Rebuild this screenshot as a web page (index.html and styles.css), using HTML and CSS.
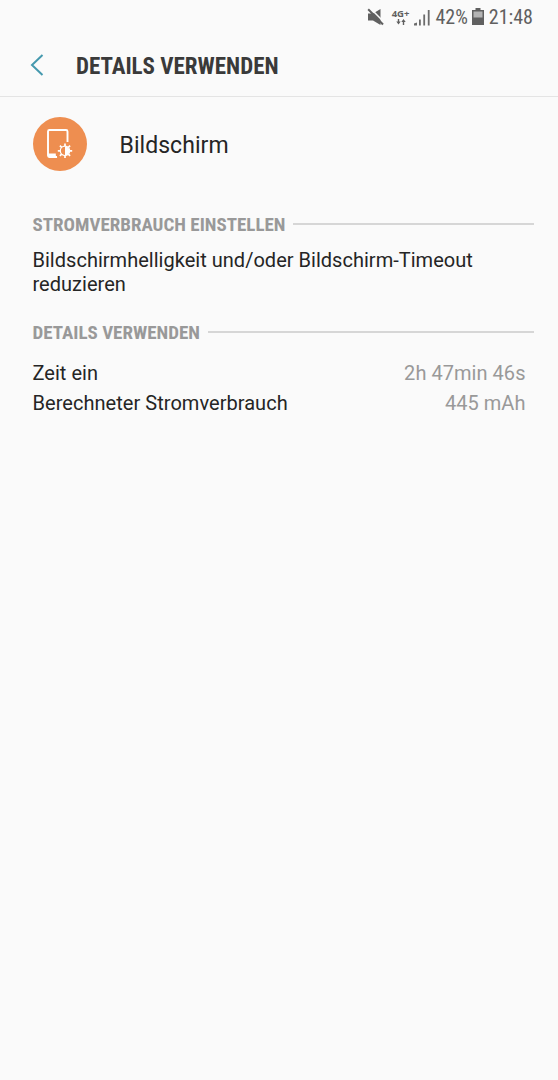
FILE: index.html
```html
<!DOCTYPE html>
<html lang="de">
<head>
    <meta charset="UTF-8">
    <meta name="viewport" content="width=device-width, initial-scale=1.0">
    <title>Details verwenden</title>
    <link rel="stylesheet" href="styles.css">
</head>
<body>
    <div class="status-bar">
        <svg class="icon-mute" width="18" height="18" viewBox="0 0 18 18">
            <path d="M1 5.500h5l7.500-4.500v16L6 12.500H1z" fill="#606060"/>
            <path d="M3 0L18 15" stroke="#fafafa" stroke-width="1.500"/>
            <path d="M1.200 1.200L16 16.500" stroke="#606060" stroke-width="2"/>
        </svg>
        <div class="network">
            <span class="network-type">4G+</span>
            <svg width="10" height="6" viewBox="0 0 10 6">
                <path d="M2.500 0v3M7.500 3v3" stroke="#606060" stroke-width="1.400"/>
                <path d="M.3 2.500h4.400L2.500 5.500zM5.300 3h4.400L7.500 0z" fill="#606060"/>
            </svg>
        </div>
        <svg class="icon-signal" width="16" height="17" viewBox="0 0 16 17">
            <path d="M0 16.500V14.500l3-1v3zM5 10.500h1.800v6H5zM9.300 5.500h1.800v11H9.300zM13.800 1h1.800v15.500h-1.800z" fill="#6c6c6c"/>
        </svg>
        <span class="battery-level">42%</span>
        <svg class="icon-battery" width="12" height="17" viewBox="0 0 12 17">
            <path d="M3.500 0h5v2H12v15H0V2h3.500z" fill="#606060"/>
            <path d="M1.500 3.500h9v6h-9z" fill="#b4b4b4"/>
        </svg>
        <span class="clock">21:48</span>
    </div>

    <div class="app-bar">
        <svg class="icon-back" width="14" height="22" viewBox="0 0 14 22">
            <path d="M12.500 1L2 11l10.500 10" fill="none" stroke="#4599ae" stroke-width="2"/>
        </svg>
        <h1 class="title">DETAILS VERWENDEN</h1>
    </div>

    <div class="container">
        <div class="app">
            <svg class="app-icon" width="54" height="54" viewBox="0 0 54 54">
                <circle cx="27" cy="27" r="27" fill="#ee8e50"/>
                <path d="M24 40H16.500a1.500 1.500 0 0 1-1.500-1.500V14.500a1.500 1.500 0 0 1 1.500-1.500H33a1.500 1.500 0 0 1 1.500 1.500V25" fill="none" stroke="#fff" stroke-width="1.900"/>
                <path d="M15 36.500h7.800v2l1.500 2.400H17l-2-1z" fill="#fff"/>
                <g transform="translate(32 33.800)" stroke="#fff" stroke-width="1.700">
                    <path d="M0-7.200V7.200M-7.200 0H7.200M-5.100-5.100L5.100 5.100M-5.100 5.100L5.100-5.100"/>
                    <circle r="4.700" fill="#ee8e50" stroke-width="1.200"/>
                    <path d="M0-4.500a4.500 4.500 0 0 1 0 9z" fill="#fff" stroke="none"/>
                </g>
            </svg>
            <span class="app-name">Bildschirm</span>
        </div>

        <h2 class="section-title section-power"><span>STROMVERBRAUCH EINSTELLEN</span></h2>
        <p class="hint">Bildschirmhelligkeit und/oder Bildschirm-Timeout reduzieren</p>

        <h2 class="section-title section-details"><span>DETAILS VERWENDEN</span></h2>
        <div class="details">
            <div class="row">
                <span>Zeit ein</span>
                <span class="value">2h 47min 46s</span>
            </div>
            <div class="row">
                <span>Berechneter Stromverbrauch</span>
                <span class="value">445 mAh</span>
            </div>
        </div>
    </div>
</body>
</html>
```
FILE: styles.css
```css
* {
    margin: 0;
    padding: 0;
    box-sizing: border-box;
}

body {
    min-height: 100vh;
    background-color: #fafafa;
    color: #252525;
    font-family: 'Roboto', sans-serif;
    font-size: 20px;
}

svg {
    display: block;
    flex-shrink: 0;
}

.status-bar {
    display: flex;
    justify-content: flex-end;
    align-items: center;
    height: 34px;
    padding-right: 25px;
    color: #606060;
    font-size: 20px;
    font-stretch: 75%;
}

.icon-mute,
.icon-battery {
    margin-bottom: 1px;
}

.network {
    display: flex;
    flex-direction: column;
    align-items: center;
    margin: 0 5px 0 7px;
}

.network-type {
    font-family: 'Open Sans', sans-serif;
    font-size: 9.5px;
    font-weight: bold;
    font-stretch: 100%;
    line-height: 10px;
}

.battery-level {
    margin: 0 4px 0 5px;
}

.clock {
    margin-left: 5px;
}

.app-bar {
    display: flex;
    align-items: center;
    height: 63px;
    padding-left: 30px;
    border-bottom: 1px solid #e4e4e4;
}

.title {
    margin: 2px 0 0 32px;
    color: #3a3a3a;
    font-size: 23px;
    font-weight: bold;
    font-stretch: 75%;
}

.container {
    padding: 20px 24px 0 32.5px;
}

.app {
    display: flex;
    align-items: center;
}

.app-name {
    margin: 2px 0 0 33px;
    font-size: 23px;
    letter-spacing: 0.05px;
}

.section-title {
    display: flex;
    align-items: center;
    height: 24px;
    color: #999;
    font-size: 19px;
    font-weight: bold;
    font-stretch: 75%;
}

.section-title::after {
    content: "";
    flex: 1;
    height: 2px;
    margin-left: 8px;
    background-color: #d6d6d6;
}

.section-power {
    margin-top: 41px;
}

.section-details {
    margin-top: 24px;
}

.hint {
    margin-top: 12px;
    line-height: 24px;
    letter-spacing: 0.02px;
}

.details {
    margin-top: 14px;
    padding-right: 8.500px;
}

.row {
    display: flex;
    justify-content: space-between;
    line-height: 30px;
    letter-spacing: 0.04px;
}

.value {
    color: #999;
}
```
